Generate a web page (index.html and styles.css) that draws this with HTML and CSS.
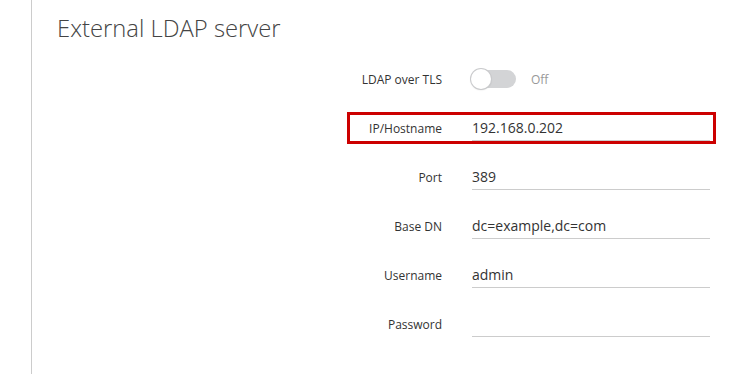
FILE: index.html
```html
<!DOCTYPE html>
<html lang="en">
<head>
    <meta charset="UTF-8">
    <meta name="viewport" content="width=device-width, initial-scale=1.0">
    <title>External LDAP server</title>
    <link rel="stylesheet" href="styles.css">
</head>
<body>

    <div class="panel">
        <h2 class="panel-title">External LDAP server</h2>

        <!-- LDAP settings form -->
        <div class="form">
            <div class="form-row">
                <label class="form-label">LDAP over TLS</label>
                <div class="switch-wrap">
                    <span class="switch"><span class="switch-knob"></span></span>
                    <span class="switch-state">Off</span>
                </div>
            </div>

            <div class="form-row form-row-marked">
                <label class="form-label" for="host">IP/Hostname</label>
                <input class="form-input" id="host" type="text" value="192.168.0.202">
            </div>

            <div class="form-row">
                <label class="form-label" for="port">Port</label>
                <input class="form-input" id="port" type="text" value="389">
            </div>

            <div class="form-row">
                <label class="form-label" for="base-dn">Base DN</label>
                <input class="form-input" id="base-dn" type="text" value="dc=example,dc=com">
            </div>

            <div class="form-row">
                <label class="form-label" for="username">Username</label>
                <input class="form-input" id="username" type="text" value="admin">
            </div>

            <div class="form-row">
                <label class="form-label" for="password">Password</label>
                <input class="form-input" id="password" type="password" value="">
            </div>
        </div>
    </div>

</body>
</html>
```

FILE: styles.css
```css
/* General styling */
body {
    margin: 0;
    font-family: "Open Sans", Arial, sans-serif;
    background-color: #fff;
    color: #333;
}

.panel {
    margin-left: 31px;
    min-height: 100vh;
    border-left: 1px solid #ccc;
    padding: 13px 0 0 25px;
    box-sizing: border-box;
}

.panel-title {
    margin: 0;
    font-size: 23.8px;
    font-weight: 300;
    line-height: 30px;
    color: #444;
}

/* Form rows */
.form {
    display: flex;
    flex-direction: column;
    gap: 23px;
    margin-top: 23px;
    padding-left: 293px;
}

.form-row {
    display: grid;
    grid-template-columns: 92px 238px;
    column-gap: 30px;
    align-items: center;
    width: 363px;
    height: 26px;
}

.form-row-marked {
    outline: 3px solid #cc0000;
}

.form-label {
    text-align: right;
    font-size: 12px;
    color: #333;
}

.form-input {
    height: 26px;
    box-sizing: border-box;
    padding: 0 0 1px;
    border: none;
    border-bottom: 1px solid #ccc;
    font-family: inherit;
    font-size: 14px;
    color: #333;
    background: transparent;
    outline: none;
}

/* Toggle switch */
.switch-wrap {
    display: flex;
    align-items: center;
}

.switch {
    position: relative;
    display: inline-block;
    width: 44px;
    height: 18px;
    border-radius: 9px;
    background-color: #d3d4d6;
}

.switch-knob {
    position: absolute;
    top: -1px;
    left: -1px;
    width: 20px;
    height: 20px;
    border-radius: 50%;
    background-color: #fff;
    box-shadow: 0 0 0 1px #c9cacc, 0 1px 2px rgba(0, 0, 0, 0.15);
}

.switch-state {
    margin-left: 15px;
    font-size: 12px;
    color: #999;
}
```
